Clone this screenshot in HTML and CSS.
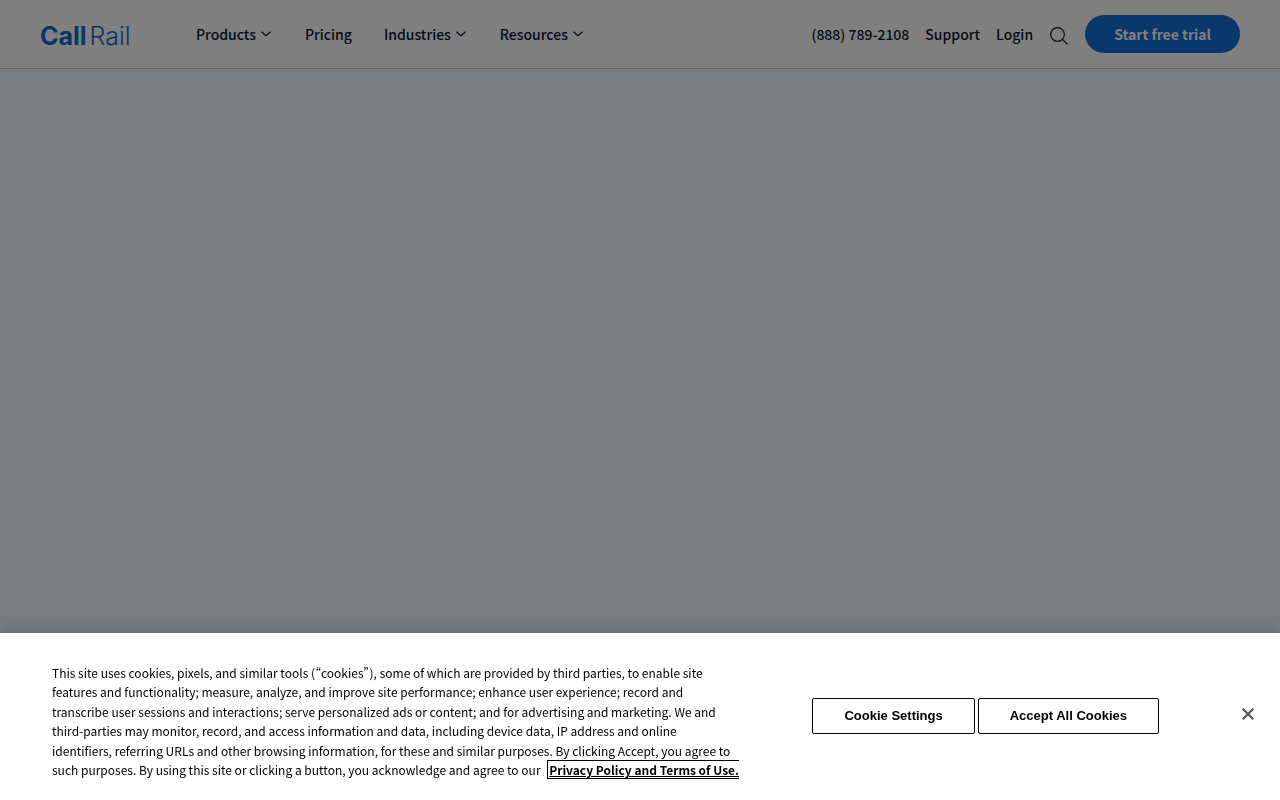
FILE: index.html
```html
<!DOCTYPE html>
<html lang="en">
<head>
    <meta charset="UTF-8">
    <meta name="viewport" content="width=device-width, initial-scale=1.0">
    <title>CallRail</title>
    <link rel="stylesheet" href="styles.css">
</head>
<body>
    <header class="site-header">
        <a href="#" class="logo"><b>Call</b><span>Rail</span></a>

        <!-- Main menu -->
        <nav class="main-nav">
            <button type="button">Products
                <svg class="chevron" viewBox="0 0 10 6"><path d="M.5 .8l4.5 4 4.5-4"/></svg>
            </button>
            <a href="#">Pricing</a>
            <button type="button">Industries
                <svg class="chevron" viewBox="0 0 10 6"><path d="M.5 .8l4.5 4 4.5-4"/></svg>
            </button>
            <button type="button">Resources
                <svg class="chevron" viewBox="0 0 10 6"><path d="M.5 .8l4.5 4 4.5-4"/></svg>
            </button>
        </nav>

        <!-- Utility menu -->
        <div class="utility-nav">
            <a href="tel:8887892108">(888) 789-2108</a>
            <a href="#">Support</a>
            <a href="#">Login</a>
            <button type="button" class="search-btn" aria-label="Search">
                <svg viewBox="0 0 18 18"><circle cx="7.5" cy="7.5" r="6.8"/><path d="M12.4 12.4l5 5"/></svg>
            </button>
            <a href="#" class="trial-btn">Start free trial</a>
        </div>
    </header>

    <div class="overlay"></div>

    <!-- Cookie banner -->
    <div class="cookie-banner" role="dialog" aria-label="Cookies">
        <p class="cookie-text">This site uses cookies, pixels, and similar tools (“cookies”), some of which are provided by third parties, to enable site features and functionality; measure, analyze, and improve site performance; enhance user experience; record and transcribe user sessions and interactions; serve personalized ads or content; and for advertising and marketing. We and third-parties may monitor, record, and access information and data, including device data, IP address and online<br> identifiers, referring URLs and other browsing information, for these and similar purposes. By clicking Accept, you agree to such purposes. By using this site or clicking a button, you acknowledge and agree to our <a href="#">Privacy Policy and Terms of Use.</a></p>
        <div class="cookie-buttons">
            <button type="button">Cookie Settings</button>
            <button type="button">Accept All Cookies</button>
        </div>
        <button type="button" class="close-btn" aria-label="Close">
            <svg viewBox="0 0 12 12"><path d="M1.5 1.5l9 9M10.5 1.5l-9 9"/></svg>
        </button>
    </div>
</body>
</html>
```

FILE: styles.css
```css
* {
    box-sizing: border-box;
}
body {
    font-family: "Noto Sans CJK SC", sans-serif;
    font-size: 14px;
    font-weight: 500;
    line-height: 24px;
    color: #0f1728;
    background-color: #f6f8fa;
    margin: 0;
    min-height: 100vh;
}
a {
    color: inherit;
    text-decoration: none;
}
button {
    font: inherit;
    color: inherit;
    background: none;
    border: none;
    padding: 0;
    cursor: pointer;
}
svg {
    display: block;
    fill: none;
    stroke: currentColor;
}

/* Header */
.site-header {
    display: flex;
    align-items: center;
    height: 69px;
    padding: 0 40px;
    background-color: #fff;
    border-bottom: 1px solid #c6c9d2;
}
.logo {
    display: flex;
    gap: 3px;
    width: 92px;
    margin-right: 64px;
    padding-top: 4px;
    font-family: Inter, sans-serif;
    font-size: 25px;
    line-height: 32px;
    color: #1469c8;
}
.logo b {
    font-weight: 700;
}
.logo span {
    font-weight: 300;
}
.main-nav {
    display: flex;
    gap: 32px;
}
.main-nav button {
    display: flex;
    align-items: center;
    gap: 5px;
}
.chevron {
    width: 10px;
    height: 6px;
    margin-right: 2px;
    stroke-width: 1.2;
}
.utility-nav {
    display: flex;
    align-items: center;
    gap: 16px;
    margin-left: auto;
}
.search-btn {
    padding: 4px 1px 0;
}
.search-btn svg {
    width: 18px;
    height: 18px;
    stroke-width: 1.2;
}
.trial-btn {
    padding: 7px 29px;
    border-radius: 19px;
    background-color: #1470d8;
    color: #fff;
    font-weight: bold;
}

/* Dark layer behind the banner */
.overlay {
    position: fixed;
    inset: 0;
    background-color: rgba(0, 0, 0, 0.5);
}

/* Cookie banner */
.cookie-banner {
    position: fixed;
    left: 0;
    right: 0;
    bottom: 0;
    display: flex;
    align-items: center;
    padding: 0 25px 0 52px;
    background-color: #fff;
    color: #000;
    box-shadow: 0 0 18px rgba(0, 0, 0, 0.2);
}
.cookie-text {
    max-width: 690px;
    margin: 30px 0 20px;
    font-size: 12px;
    font-weight: normal;
    line-height: 1.63;
}
.cookie-text a {
    margin-left: 4px;
    padding-left: 1px;
    border: 1px solid #000;
    border-right: none;
    font-weight: bold;
    text-decoration: underline;
}
.cookie-buttons {
    display: flex;
    flex-shrink: 0;
    gap: 3px;
    margin-left: auto;
}
.cookie-buttons button {
    padding: 9px 31px;
    border: 1px solid #000;
    border-radius: 2px;
    font-family: "Liberation Sans", Arial, sans-serif;
    font-size: 13px;
    line-height: 16px;
    font-weight: bold;
}
.close-btn {
    margin-left: 82px;
    padding-bottom: 4px;
    color: #565656;
}
.close-btn svg {
    width: 14px;
    height: 14px;
    stroke-width: 2;
}
```
